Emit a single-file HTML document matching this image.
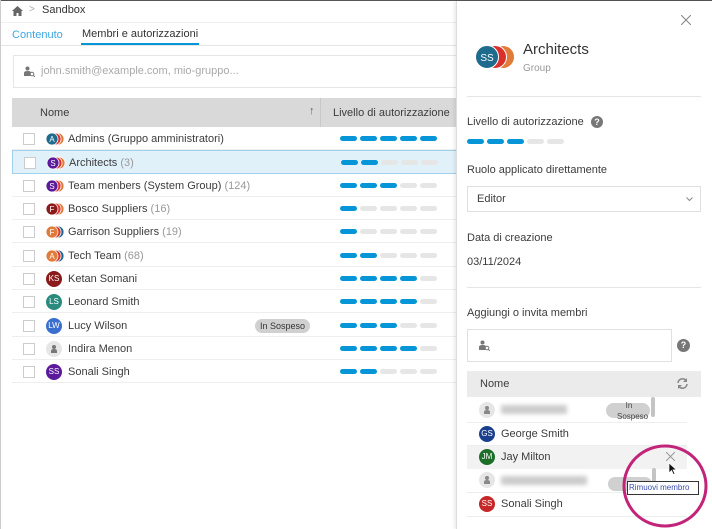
<!DOCTYPE html>
<html><head><meta charset="utf-8"><style>
*{margin:0;padding:0;box-sizing:border-box}
body{width:712px;height:529px;overflow:hidden;background:#fff;font-family:"Liberation Sans",sans-serif;font-size:11px;color:#3c3c3c;position:relative}
.a{position:absolute}
.row{position:absolute;left:12px;width:445px;height:23px;border-bottom:1px solid #eee}
.cb{position:absolute;left:11px;top:6px;width:12px;height:12px;border:1px solid #ccc;background:#fff}
.nm{position:absolute;left:56px;top:6px;font-size:11px;color:#3c3c3c;white-space:nowrap}
.nm span{color:#999}
.bars{position:absolute;left:328px;top:9px;height:5px}
.bars i{float:left;width:17px;height:5px;border-radius:3px;background:#e6e6e6;margin-right:3px}
.bars i.on{background:#0696d7}
.av{position:absolute;left:34px;top:4px;width:16px;height:16px;border-radius:50%;color:#fff;font-size:8px;text-align:center;line-height:16px}
.lbl{position:absolute;left:467px;font-size:11px;color:#3c3c3c}
</style></head><body>
<div class="a" style="left:0;top:0;width:712px;height:1px;background:#555"></div>
<div class="a" style="left:0;top:0;width:1px;height:529px;background:#ccc"></div>
<svg class="a" style="left:12px;top:6px" width="11" height="10" viewBox="0 0 11 10"><path d="M5.5 0L0 5h1.5v5h3V7h2v3h3V5H11z" fill="#666"/></svg>
<div class="a" style="left:29px;top:4px;color:#aaa;font-size:10px">&gt;</div>
<div class="a" style="left:42px;top:4px;font-size:11px;color:#333">Sandbox</div>
<div class="a" style="left:1px;top:22px;width:456px;height:1px;background:#eee"></div>
<div class="a" style="left:12px;top:29px;color:#3ea6e0;font-size:11px">Contenuto</div>
<div class="a" style="left:82px;top:28px;color:#333;font-size:11px">Membri e autorizzazioni</div>
<div class="a" style="left:81px;top:43px;width:118px;height:2px;background:#0696d7"></div>
<div class="a" style="left:1px;top:45px;width:456px;height:1px;background:#e6e6e6"></div>
<div class="a" style="left:13px;top:55px;width:445px;height:33px;border:1px solid #e6e6e6"></div>
<svg class="a" style="left:24px;top:66px" width="11" height="11" viewBox="0 0 11 11"><circle cx="3.5" cy="2.5" r="2" fill="#777"/><path d="M0 10V7q0-2 3.5-2t3 1v4z" fill="#777"/><circle cx="8" cy="8" r="1.8" fill="none" stroke="#777"/><path d="M9.3 9.3L11 11" stroke="#777"/></svg>
<div class="a" style="left:41px;top:65px;color:#aaa;font-size:11px">john.smith@example.com, mio-gruppo...</div>
<div class="a" style="left:12px;top:98px;width:445px;height:29px;background:#d9d9d9"></div>
<div class="a" style="left:40px;top:107px;color:#3c3c3c">Nome</div>
<div class="a" style="left:309px;top:105px;color:#666;font-size:11px">&#8593;</div>
<div class="a" style="left:320px;top:98px;width:1px;height:29px;background:#c8c8c8"></div>
<div class="a" style="left:333px;top:107px;color:#3c3c3c">Livello di autorizzazione</div>

<div class="row" style="top:127px"><div class="cb"></div><svg class="a" style="left:34px;top:5px" width="20" height="14"><circle cx="12" cy="7" r="6" fill="#e07b39" stroke="#fff" stroke-width=".8"/><circle cx="9" cy="7" r="6" fill="#d9302b" stroke="#fff" stroke-width=".8"/><circle cx="6" cy="7" r="6" fill="#1f6b8e" stroke="#fff" stroke-width=".8"/><text x="6" y="10" font-size="8" fill="#fff" text-anchor="middle" font-family="Liberation Sans">A</text></svg><div class="nm">Admins (Gruppo amministratori)</div><div class="bars"><i class="on"></i><i class="on"></i><i class="on"></i><i class="on"></i><i class="on"></i></div></div>
<div class="row" style="top:150px;background:#e1f1fa;border:1px solid #9fd0ec;height:24px"><div class="cb"></div><svg class="a" style="left:34px;top:5px" width="20" height="14"><circle cx="12" cy="7" r="6" fill="#e07b39" stroke="#fff" stroke-width=".8"/><circle cx="9" cy="7" r="6" fill="#d9302b" stroke="#fff" stroke-width=".8"/><circle cx="6" cy="7" r="6" fill="#5b1a9a" stroke="#fff" stroke-width=".8"/><text x="6" y="10" font-size="8" fill="#fff" text-anchor="middle" font-family="Liberation Sans">S</text></svg><div class="nm">Architects <span>(3)</span></div><div class="bars"><i class="on"></i><i class="on"></i><i></i><i></i><i></i></div></div>
<div class="row" style="top:174px"><div class="cb"></div><svg class="a" style="left:34px;top:5px" width="20" height="14"><circle cx="12" cy="7" r="6" fill="#e07b39" stroke="#fff" stroke-width=".8"/><circle cx="9" cy="7" r="6" fill="#d9302b" stroke="#fff" stroke-width=".8"/><circle cx="6" cy="7" r="6" fill="#5b1a9a" stroke="#fff" stroke-width=".8"/><text x="6" y="10" font-size="8" fill="#fff" text-anchor="middle" font-family="Liberation Sans">S</text></svg><div class="nm">Team menbers (System Group) <span>(124)</span></div><div class="bars"><i class="on"></i><i class="on"></i><i class="on"></i><i></i><i></i></div></div>
<div class="row" style="top:197px"><div class="cb"></div><svg class="a" style="left:34px;top:5px" width="20" height="14"><circle cx="12" cy="7" r="6" fill="#e07b39" stroke="#fff" stroke-width=".8"/><circle cx="9" cy="7" r="6" fill="#d9302b" stroke="#fff" stroke-width=".8"/><circle cx="6" cy="7" r="6" fill="#8b1a1a" stroke="#fff" stroke-width=".8"/><text x="6" y="10" font-size="8" fill="#fff" text-anchor="middle" font-family="Liberation Sans">F</text></svg><div class="nm">Bosco Suppliers <span>(16)</span></div><div class="bars"><i class="on"></i><i></i><i></i><i></i><i></i></div></div>
<div class="row" style="top:220px"><div class="cb"></div><svg class="a" style="left:34px;top:5px" width="20" height="14"><circle cx="12" cy="7" r="6" fill="#1f6b8e" stroke="#fff" stroke-width=".8"/><circle cx="9" cy="7" r="6" fill="#d9302b" stroke="#fff" stroke-width=".8"/><circle cx="6" cy="7" r="6" fill="#e07b39" stroke="#fff" stroke-width=".8"/><text x="6" y="10" font-size="8" fill="#fff" text-anchor="middle" font-family="Liberation Sans">F</text></svg><div class="nm">Garrison Suppliers <span>(19)</span></div><div class="bars"><i class="on"></i><i></i><i></i><i></i><i></i></div></div>
<div class="row" style="top:244px"><div class="cb"></div><svg class="a" style="left:34px;top:5px" width="20" height="14"><circle cx="12" cy="7" r="6" fill="#1f6b8e" stroke="#fff" stroke-width=".8"/><circle cx="9" cy="7" r="6" fill="#d9302b" stroke="#fff" stroke-width=".8"/><circle cx="6" cy="7" r="6" fill="#e07b39" stroke="#fff" stroke-width=".8"/><text x="6" y="10" font-size="8" fill="#fff" text-anchor="middle" font-family="Liberation Sans">A</text></svg><div class="nm">Tech Team <span>(68)</span></div><div class="bars"><i class="on"></i><i class="on"></i><i></i><i></i><i></i></div></div>
<div class="row" style="top:267px"><div class="cb"></div><div class="av" style="background:#8b1a1a">KS</div><div class="nm">Ketan Somani</div><div class="bars"><i class="on"></i><i class="on"></i><i class="on"></i><i class="on"></i><i></i></div></div>
<div class="row" style="top:290px"><div class="cb"></div><div class="av" style="background:#2a8a7e">LS</div><div class="nm">Leonard Smith</div><div class="bars"><i class="on"></i><i class="on"></i><i class="on"></i><i class="on"></i><i></i></div></div>
<div class="row" style="top:314px"><div class="cb"></div><div class="av" style="background:#3a6fd0">LW</div><div class="nm">Lucy Wilson</div><div class="a" style="left:243px;top:5px;width:55px;height:14px;border-radius:7px;background:#d0d0d0;font-size:9px;text-align:center;line-height:14px;color:#333">In Sospeso</div><div class="bars"><i class="on"></i><i class="on"></i><i class="on"></i><i></i><i></i></div></div>
<div class="row" style="top:337px"><div class="cb"></div><div class="av" style="background:#e6e6e6"><svg width="16" height="16"><circle cx="8" cy="6" r="2" fill="#777"/><path d="M5 12V10q0-2 3-2t3 2v2z" fill="#777"/></svg></div><div class="nm">Indira Menon</div><div class="bars"><i class="on"></i><i class="on"></i><i class="on"></i><i class="on"></i><i></i></div></div>
<div class="row" style="top:360px"><div class="cb"></div><div class="av" style="background:#5b1a9a">SS</div><div class="nm">Sonali Singh</div><div class="bars"><i class="on"></i><i class="on"></i><i></i><i></i><i></i></div></div>

<div class="a" style="left:456px;top:1px;width:256px;height:528px;background:#fff;border-left:1px solid #ddd;box-shadow:-2px 0 3px rgba(0,0,0,.08)"></div>
<svg class="a" style="left:681px;top:15px" width="10" height="10"><path d="M0 0L10 10M10 0L0 10" stroke="#888" stroke-width="1.1"/></svg>
<svg class="a" style="left:474px;top:44px" width="42" height="26"><circle cx="29" cy="13" r="11.5" fill="#e07b39" stroke="#fff" stroke-width="1"/><circle cx="21" cy="13" r="11.5" fill="#d9302b" stroke="#fff" stroke-width="1"/><circle cx="13" cy="13" r="11.5" fill="#1f6b8e" stroke="#fff" stroke-width="1"/><text x="13" y="17" font-size="10" fill="#fff" text-anchor="middle" font-family="Liberation Sans">SS</text></svg>
<div class="a" style="left:523px;top:41px;font-size:15px;color:#333">Architects</div>
<div class="a" style="left:523px;top:63px;font-size:10px;color:#999">Group</div>
<div class="a" style="left:467px;top:96px;width:234px;height:1px;background:#e6e6e6"></div>
<div class="lbl" style="top:116px">Livello di autorizzazione</div>
<div class="a" style="left:591px;top:116px;width:12px;height:12px;border-radius:50%;background:#777;color:#fff;font-size:9px;font-weight:bold;text-align:center;line-height:12px">?</div>
<div class="a" style="left:467px;top:139px"><div class="bars" style="left:0;top:0;position:relative"><i class="on"></i><i class="on"></i><i class="on"></i><i></i><i></i></div></div>
<div class="lbl" style="top:164px">Ruolo applicato direttamente</div>
<div class="a" style="left:467px;top:186px;width:234px;height:26px;border:1px solid #e0e0e0"></div>
<div class="lbl" style="left:477px;top:193px">Editor</div>
<svg class="a" style="left:686px;top:197px" width="7" height="5"><path d="M0.5 0.5L3.5 3.5L6.5 0.5" fill="none" stroke="#888"/></svg>
<div class="lbl" style="top:232px">Data di creazione</div>
<div class="lbl" style="top:256px">03/11/2024</div>
<div class="a" style="left:467px;top:287px;width:234px;height:1px;background:#e6e6e6"></div>
<div class="lbl" style="top:307px">Aggiungi o invita membri</div>
<div class="a" style="left:467px;top:329px;width:205px;height:33px;border:1px solid #e0e0e0"></div>
<svg class="a" style="left:479px;top:340px" width="11" height="11" viewBox="0 0 11 11"><circle cx="3.5" cy="2.5" r="2" fill="#777"/><path d="M0 10V7q0-2 3.5-2t3 1v4z" fill="#777"/><circle cx="8" cy="8" r="1.8" fill="none" stroke="#777"/><path d="M9.3 9.3L11 11" stroke="#777"/></svg>
<div class="a" style="left:677px;top:339px;width:13px;height:13px;border-radius:50%;background:#777;color:#fff;font-size:9px;font-weight:bold;text-align:center;line-height:13px">?</div>
<div class="a" style="left:467px;top:371px;width:234px;height:26px;background:#ebebeb"></div>
<div class="lbl" style="left:480px;top:378px">Nome</div>
<svg class="a" style="left:676px;top:377px" width="13" height="13" viewBox="0 0 13 13"><path d="M2 6a4.5 4.5 0 0 1 8-2.5M11 7a4.5 4.5 0 0 1-8 2.5" fill="none" stroke="#888" stroke-width="1.5"/><path d="M11 1v4H7z M2 12V8h4z" fill="#888"/></svg>
<div class="a" style="left:467px;top:398px;width:220px;height:25px;border-bottom:1px solid #eee"></div>
<div class="a" style="left:479px;top:402px;width:16px;height:16px;border-radius:50%;background:#e6e6e6"><svg width="16" height="16"><circle cx="8" cy="6" r="2" fill="#888"/><path d="M5 12V10q0-2 3-2t3 2v2z" fill="#888"/></svg></div>
<div class="a" style="left:501px;top:405px;width:66px;height:9px;background:#ccc;filter:blur(2px)"></div>
<div class="a" style="left:606px;top:403px;width:44px;height:15px;border-radius:8px;background:#d0d0d0"></div>
<div class="a" style="left:617px;top:400px;font-size:8px;color:#444;line-height:11px;text-align:center;width:24px">In<br>Sospeso</div>
<div class="a" style="left:651px;top:397px;width:4px;height:20px;background:#c4c4c4;border-radius:2px"></div>
<div class="a" style="left:467px;top:423px;width:220px;height:23px;border-bottom:1px solid #eee"></div>
<div class="a" style="left:479px;top:426px;width:16px;height:16px;border-radius:50%;background:#1a3f8e;color:#fff;font-size:8px;text-align:center;line-height:16px">GS</div>
<div class="lbl" style="left:501px;top:428px">George Smith</div>
<div class="a" style="left:467px;top:446px;width:220px;height:23px;background:#f2f2f2"></div>
<div class="a" style="left:479px;top:449px;width:16px;height:16px;border-radius:50%;background:#1e6e2a;color:#fff;font-size:8px;text-align:center;line-height:16px">JM</div>
<div class="lbl" style="left:501px;top:451px">Jay Milton</div>
<svg class="a" style="left:666px;top:452px" width="9" height="9"><path d="M0 0L9 9M9 0L0 9" stroke="#999" stroke-width="1"/></svg>
<div class="a" style="left:467px;top:469px;width:220px;height:24px;border-bottom:1px solid #eee"></div>
<div class="a" style="left:479px;top:472px;width:16px;height:16px;border-radius:50%;background:#e6e6e6"><svg width="16" height="16"><circle cx="8" cy="6" r="2" fill="#888"/><path d="M5 12V10q0-2 3-2t3 2v2z" fill="#888"/></svg></div>
<div class="a" style="left:501px;top:476px;width:86px;height:9px;background:#ccc;filter:blur(2px)"></div>
<div class="a" style="left:608px;top:477px;width:44px;height:14px;border-radius:7px;background:#d0d0d0"></div>
<div class="a" style="left:652px;top:468px;width:4px;height:20px;background:#c4c4c4;border-radius:2px"></div>
<div class="a" style="left:627px;top:481px;width:72px;height:14px;background:#fff;border:1px solid #333;font-size:8px;color:#3a4fb0;line-height:12px;padding-left:1px">Rimuovi membro</div>
<svg class="a" style="left:668px;top:462px" width="10" height="14"><path d="M1 1v10l2.5-2.5 2 4 1.5-.8-2-3.8H8.5z" fill="#111" stroke="#fff" stroke-width=".7"/></svg>
<div class="a" style="left:479px;top:496px;width:16px;height:16px;border-radius:50%;background:#c62828;color:#fff;font-size:8px;text-align:center;line-height:16px">SS</div>
<div class="lbl" style="left:501px;top:498px">Sonali Singh</div>
<div class="a" style="left:467px;top:516px;width:220px;height:1px;background:#eee"></div>
<svg class="a" style="left:621px;top:443px" width="90" height="86"><ellipse cx="44" cy="43" rx="41" ry="40" fill="none" stroke="#c2247a" stroke-width="3"/></svg>
</body></html>
